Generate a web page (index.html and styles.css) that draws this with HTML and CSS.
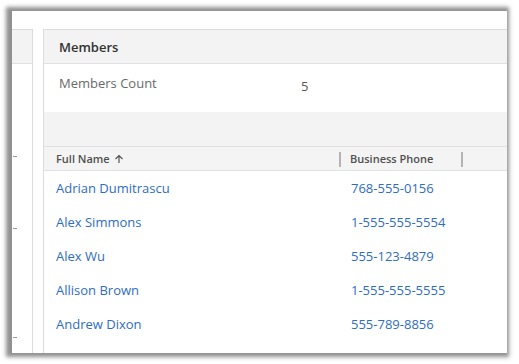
FILE: index.html
```html
<!DOCTYPE html>
<html>
<head>
<meta charset="utf-8">
<link rel="stylesheet" href="styles.css">
</head>
<body>
<div class="frame">
  <div class="side">
    <div class="side-head"></div>
    <div class="side-body">
      <span class="tick t1"></span>
      <span class="tick t2"></span>
      <span class="tick t3"></span>
    </div>
  </div>
  <div class="main">
    <div class="sec-head">Members</div>
    <div class="count-row">
      <span class="count-label">Members Count</span>
      <span class="count-value">5</span>
    </div>
    <div class="band"></div>
    <div class="grid-head">
      <div class="col col-name">Full Name
        <svg class="sort" width="10" height="10" viewBox="0 0 10 10"><path d="M5 9V1.5M1.5 5L5 1.5 8.5 5" fill="none" stroke="#555" stroke-width="1.2"/></svg>
      </div>
      <div class="col col-phone"><span class="sep"></span>Business Phone<span class="sep sep-r"></span></div>
    </div>
    <div class="grid-row"><a class="col col-name">Adrian Dumitrascu</a><a class="col col-phone">768-555-0156</a></div>
    <div class="grid-row"><a class="col col-name">Alex Simmons</a><a class="col col-phone">1-555-555-5554</a></div>
    <div class="grid-row"><a class="col col-name">Alex Wu</a><a class="col col-phone">555-123-4879</a></div>
    <div class="grid-row"><a class="col col-name">Allison Brown</a><a class="col col-phone">1-555-555-5555</a></div>
    <div class="grid-row"><a class="col col-name">Andrew Dixon</a><a class="col col-phone">555-789-8856</a></div>
  </div>
</div>
</body>
</html>
```

FILE: styles.css
```css
html, body {
  margin: 0;
  padding: 0;
  background: #fff;
}
body {
  font-family: "Open Sans", "Noto Sans", sans-serif;
  width: 519px;
  height: 364px;
  overflow: hidden;
}
.frame {
  margin: 11px 0 0 12px;
  width: 495px;
  height: 342px;
  background: #fff;
  box-shadow: -2px 0 4px 4px rgba(70,70,70,0.6);
  display: flex;
  padding-top: 18px;
  box-sizing: border-box;
  overflow: hidden;
}
.side {
  width: 20px;
  border-right: 1px solid #dcdcdc;
  border-top: 1px solid #dcdcdc;
  margin-right: 10px;
  display: flex;
  flex-direction: column;
}
.side-head {
  height: 33px;
  background: #f3f3f3;
  border-bottom: 1px solid #e0e0e0;
}
.side-body {
  position: relative;
  flex: 1;
}
.tick {
  position: absolute;
  left: 1px;
  width: 4px;
  height: 1px;
  background: #999;
}
.t1 { top: 92px; }
.t2 { top: 164px; }
.t3 { top: 273px; }
.main {
  flex: 1;
  border-left: 1px solid #dcdcdc;
  border-top: 1px solid #dcdcdc;
  display: flex;
  flex-direction: column;
}
.sec-head {
  height: 33px;
  background: #f3f3f3;
  border-bottom: 1px solid #e0e0e0;
  display: flex;
  align-items: center;
  padding-left: 15px;
  font-size: 13px;
  font-weight: 600;
  color: #333;
}
.count-row {
  height: 48px;
  display: flex;
  align-items: flex-start;
  padding-left: 15px;
  padding-top: 10px;
  box-sizing: border-box;
  font-size: 13px;
}
.count-label {
  width: 242px;
  color: #6a6a6a;
}
.count-value {
  color: #555;
  padding-top: 3px;
}
.band {
  height: 34px;
  background: #f3f3f3;
  border-bottom: 1px solid #e0e0e0;
}
.grid-head {
  height: 23px;
  background: #f4f4f4;
  border-bottom: 1px solid #e2e2e2;
  display: flex;
  align-items: center;
  font-size: 11px;
  font-weight: 600;
  color: #505050;
}
.col-name {
  width: 295px;
  padding-left: 12px;
  box-sizing: border-box;
  display: flex;
  align-items: center;
}
.sort {
  margin-left: 4px;
}
.col-phone {
  position: relative;
  padding-left: 12px;
}
.grid-head .col-phone {
  width: 124px;
  box-sizing: border-box;
  padding-left: 11px;
}
.sep {
  position: absolute;
  left: 0;
  top: 50%;
  width: 2px;
  height: 15px;
  margin-top: -7px;
  background: #b4b4b4;
}
.sep-r {
  left: auto;
  right: 0;
}
.grid-row {
  height: 34px;
  display: flex;
  align-items: center;
  font-size: 13px;
  color: #2e6dc4;
}
.grid-row .col-phone {
  padding-left: 12px;
}
```
